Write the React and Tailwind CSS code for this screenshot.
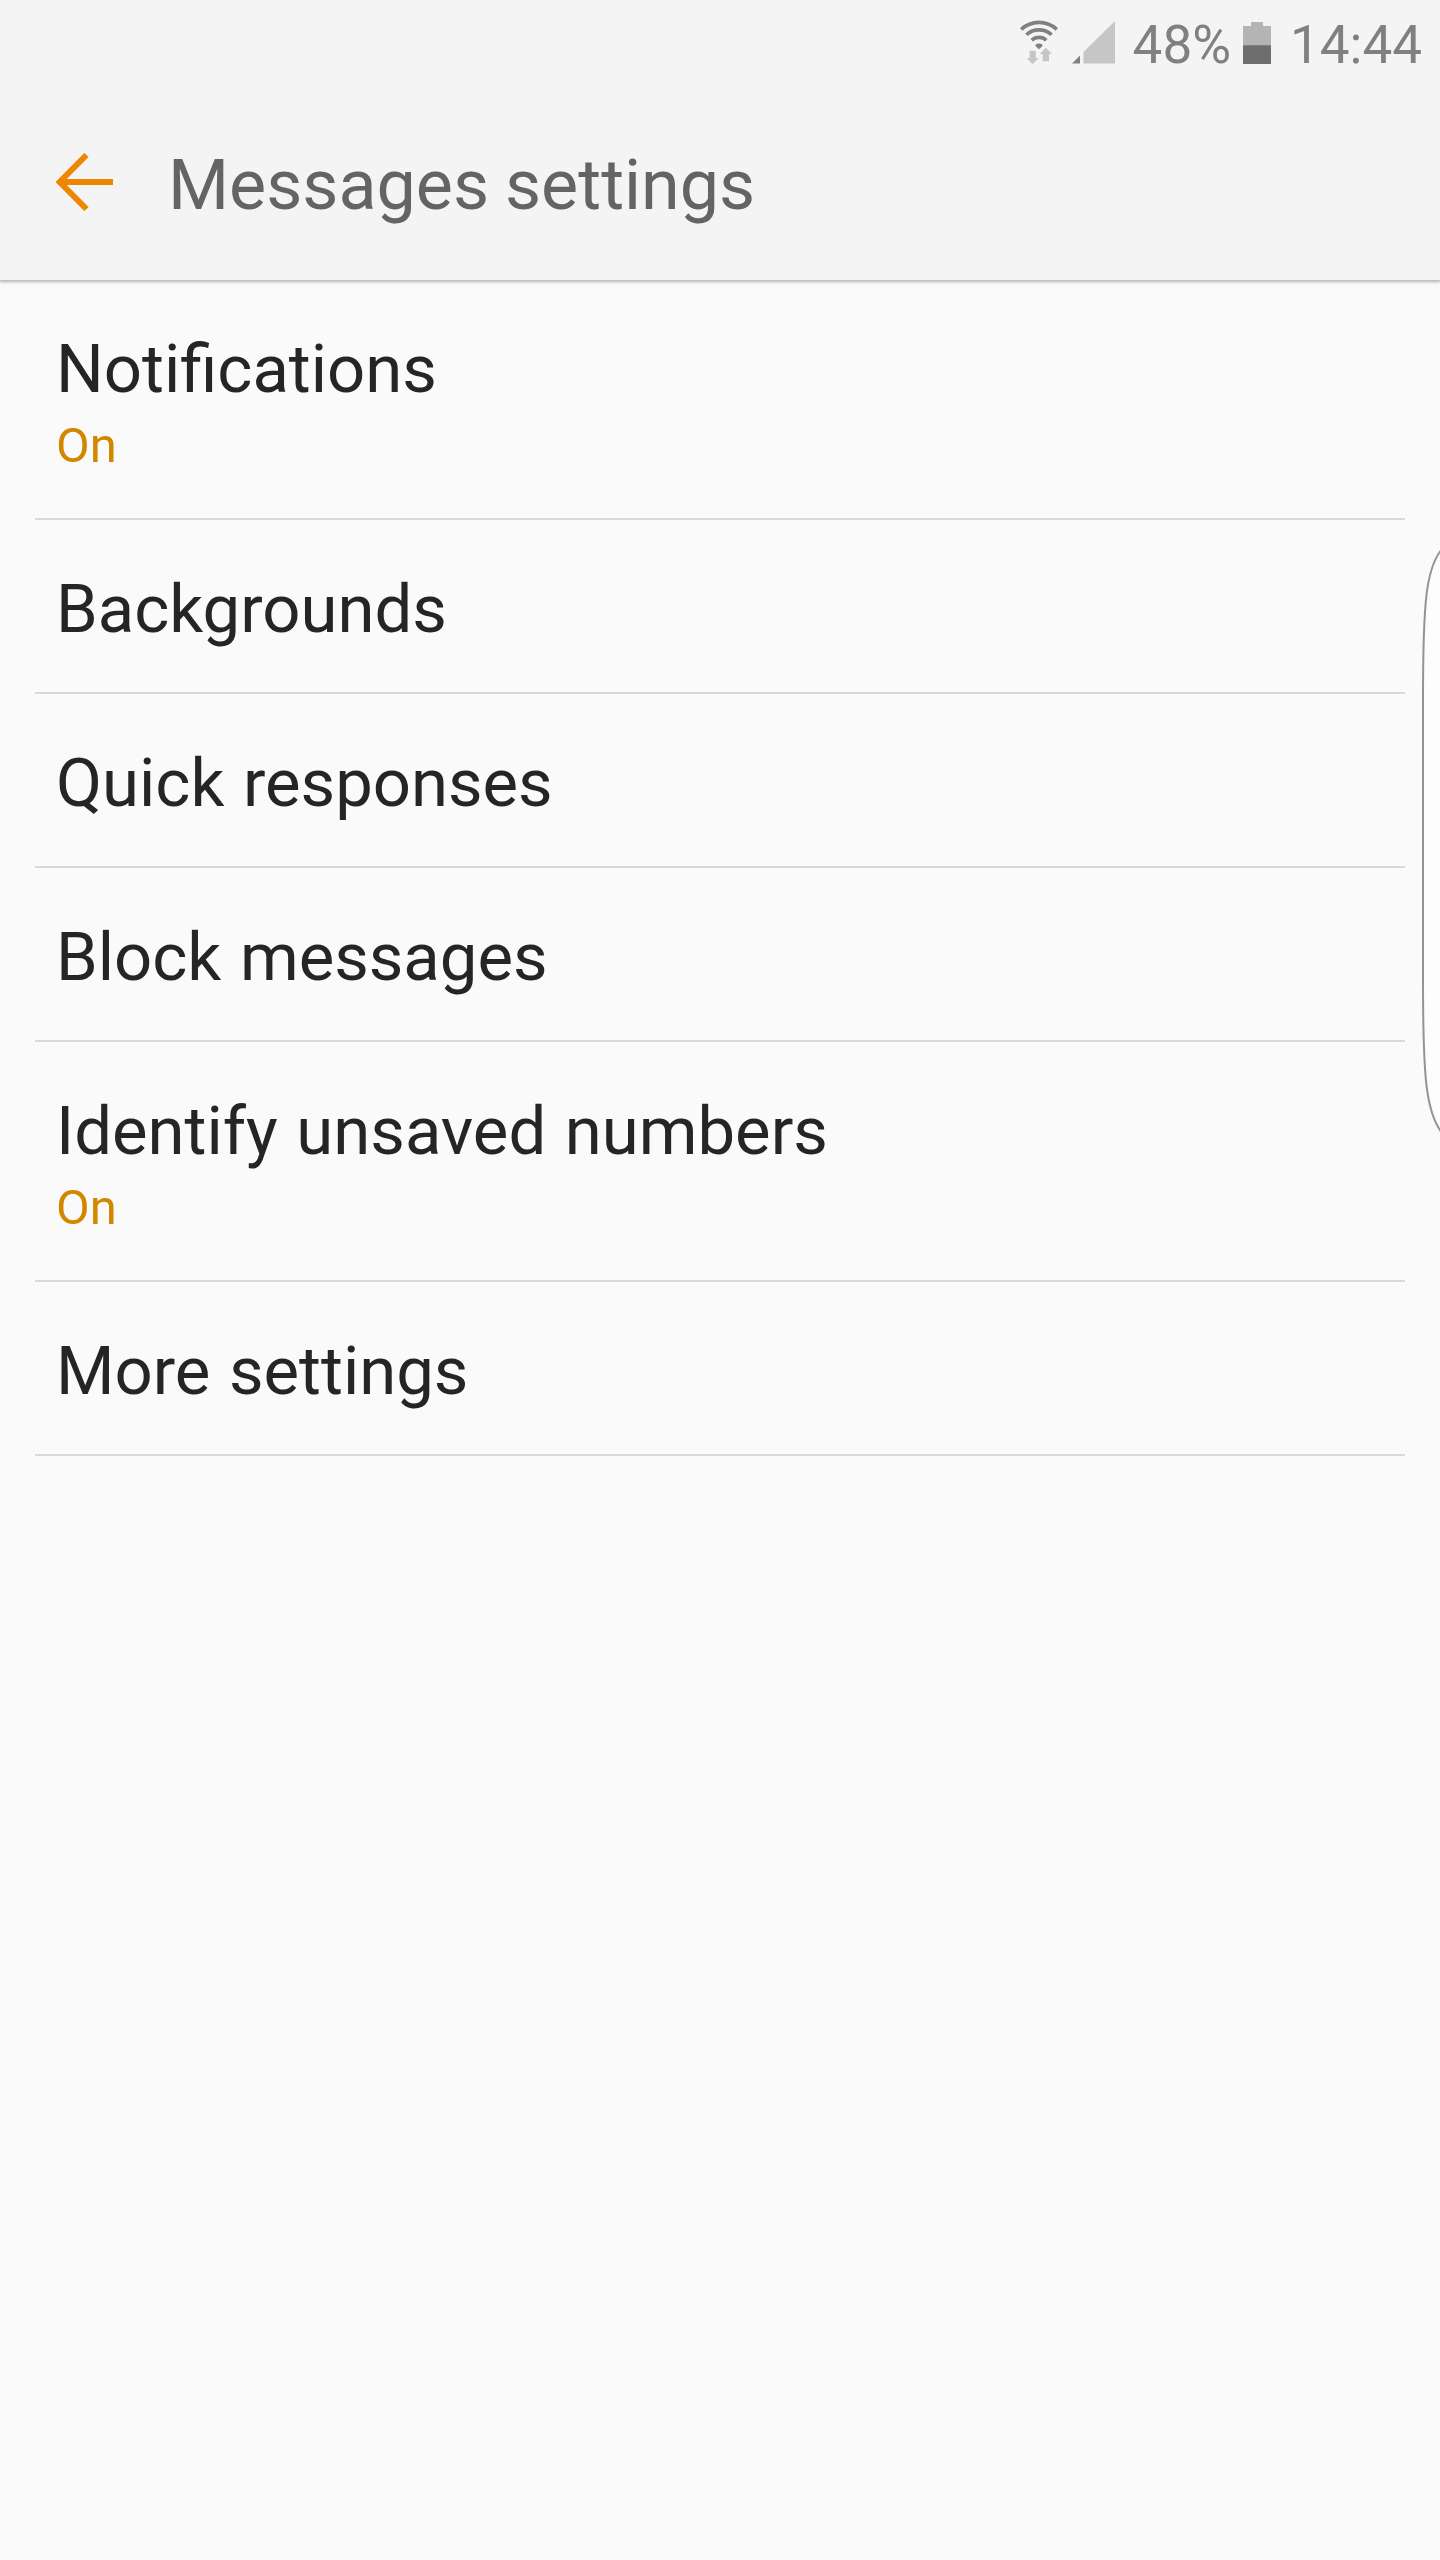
const settings = [
  { title: 'Notifications', status: 'On' },
  { title: 'Backgrounds' },
  { title: 'Quick responses' },
  { title: 'Block messages' },
  { title: 'Identify unsaved numbers', status: 'On' },
  { title: 'More settings' },
];

const WifiIcon = () => (
  <svg className="w-[38px] h-[46px]" viewBox="0 0 38 46" fill="none">
    <g stroke="#808080" strokeWidth="3.6">
      <path d="M1.2 9.4A26 26 0 0 1 36.8 9.4" />
      <path d="M6.4 14.8A18.5 18.5 0 0 1 31.6 14.8" />
      <path d="M11.7 20.3A10.5 10.5 0 0 1 26.3 20.3" />
    </g>
    <path d="M15.5 24.8Q19 22.2 22.5 24.8V26L19 29.3L15.5 26Z" fill="#808080" />
    <path
      d="M9.6 30.7h6.2v7.3h2.8l-6 6.2-6-6.2h3z M22.7 41.3v-7.3h-3l6.1-6.3 6.2 6.3h-3v7.3z"
      fill="#c6c6c6"
    />
  </svg>
);

const SignalIcon = () => (
  <svg className="w-[43px] h-[43px]" viewBox="0 0 43 43">
    <path d="M0 42.5L8 34.5V42.5Z" fill="#808080" />
    <path d="M11.5 31L43 0V42.5H11.5Z" fill="#c6c6c6" />
  </svg>
);

const BatteryIcon = () => (
  <svg className="w-[28px] h-[42px]" viewBox="0 0 28 42">
    <path d="M8 0H20V4H28V24H0V4H8Z" fill="#b4b4b4" />
    <path d="M0 23.3H28V42H0Z" fill="#6e6e6e" />
  </svg>
);

const SettingItem = ({ title, status }) => (
  <li
    className={
      status
        ? 'h-[240px] pt-[49px] px-[21px] border-b-2 border-[#d9d9d9]'
        : 'h-[174px] pt-[49px] px-[21px] border-b-2 border-[#d9d9d9]'
    }
  >
    <p className="text-[67px] leading-[80px] [word-spacing:2px] text-[#252525]">
      {title}
    </p>
    {status && (
      <p className="mt-[9px] text-[49px] leading-[56px] text-[#d28700]">
        {status}
      </p>
    )}
  </li>
);

export default function App() {
  return (
    <div className="relative w-[1440px] h-[2560px] overflow-hidden bg-[#fafafa] font-[Roboto,sans-serif]">
      <header className="h-[280px] bg-[#f4f4f4] shadow-[0_1px_3px_1px_rgba(0,0,0,0.28)]">
        <div className="flex items-start justify-end h-[96px] pt-[20px] pr-[18px] text-[53px] leading-[50px] text-[#808080]">
          <WifiIcon />
          <div className="ml-[13.5px] mt-px">
            <SignalIcon />
          </div>
          <span className="ml-[18px]">48%</span>
          <div className="ml-[12px] mt-[2px]">
            <BatteryIcon />
          </div>
          <span className="ml-[19px]">14:44</span>
        </div>
        <div className="flex items-start pl-[56px]">
          <svg
            className="w-[57px] h-[58px] mt-[57px]"
            viewBox="0 0 57 58"
            fill="none"
            stroke="#ed8600"
            strokeWidth="6"
          >
            <path d="M57 29H5M30.5 2L3.7 29L30.5 56" />
          </svg>
          <h1 className="ml-[55px] mt-[48px] text-[70px] leading-[82px] [word-spacing:-1.5px] text-[#646464]">
            Messages settings
          </h1>
        </div>
      </header>
      <main>
        <ul className="mx-[35px]">
          {settings.map((item) => (
            <SettingItem key={item.title} {...item} />
          ))}
        </ul>
      </main>
      {/* edge panel handle */}
      <svg
        className="absolute right-0 top-[540px] w-[20px] h-[600px]"
        viewBox="0 0 20 600"
      >
        <path
          d="M22 9C6 28 3 62 3 160V440C3 538 6 572 22 593"
          fill="#fdfdfd"
          stroke="#949494"
          strokeWidth="2"
        />
      </svg>
    </div>
  );
}
